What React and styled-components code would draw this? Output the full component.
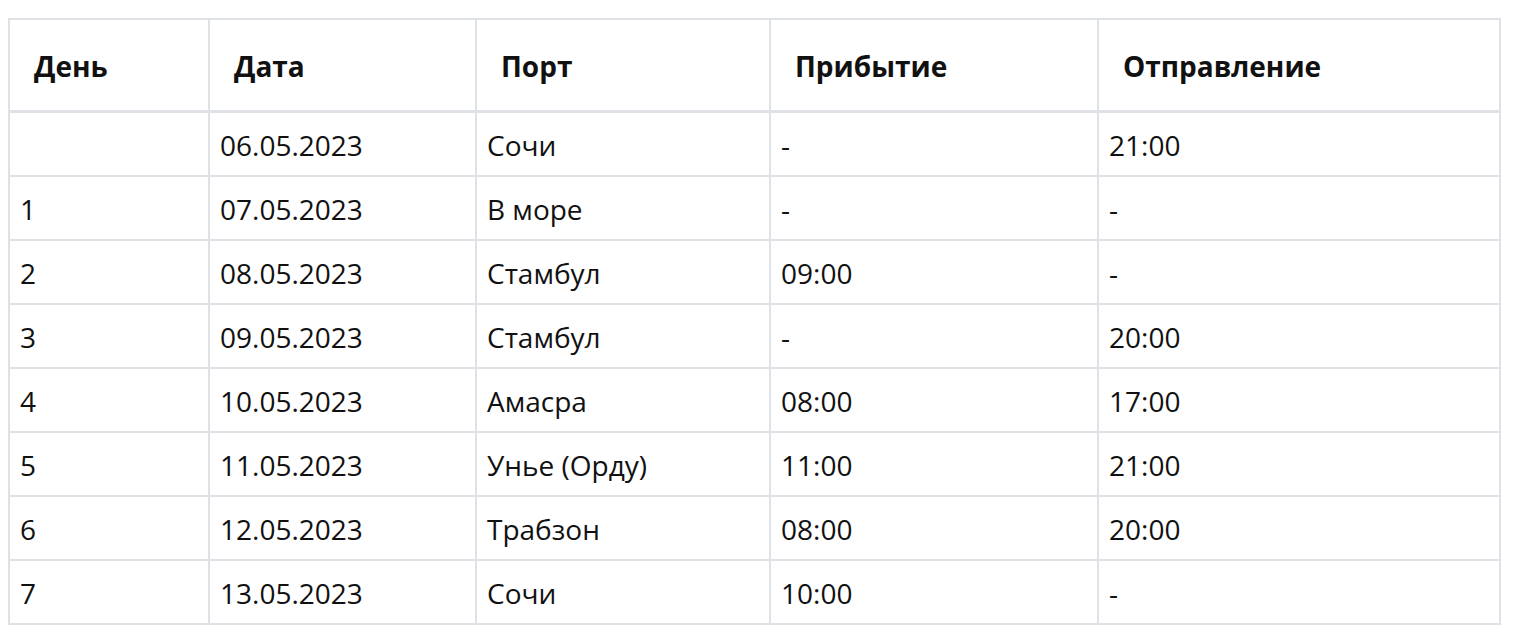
import React from "react";
import styled, { createGlobalStyle } from "styled-components";

const rows = [
  ["", "06.05.2023", "Сочи", "-", "21:00"],
  ["1", "07.05.2023", "В море", "-", "-"],
  ["2", "08.05.2023", "Стамбул", "09:00", "-"],
  ["3", "09.05.2023", "Стамбул", "-", "20:00"],
  ["4", "10.05.2023", "Амасра", "08:00", "17:00"],
  ["5", "11.05.2023", "Унье (Орду)", "11:00", "21:00"],
  ["6", "12.05.2023", "Трабзон", "08:00", "20:00"],
  ["7", "13.05.2023", "Сочи", "10:00", "-"],
];

const widths = [200, 267, 294, 328, 402];

const GlobalStyle = createGlobalStyle`
  body {
    margin: 0;
    background: #fff;
    font-family: "Open Sans", "Noto Sans", sans-serif;
    color: #212529;
  }
`;

const Wrapper = styled.div`
  padding: 18px 16px 0 8px;
`;

const Table = styled.table`
  border-collapse: collapse;
  table-layout: fixed;
  width: 1491px;
  border: 2px solid #dee2e6;
  font-size: 28px;
  line-height: 1.4;
`;

const Th = styled.th`
  text-align: left;
  font-weight: 700;
  height: 86px;
  padding: 4px 24px 0;
  border: 2px solid #dee2e6;
  border-bottom-width: 3px;
  color: #111;
  vertical-align: middle;
`;

const Td = styled.td`
  height: 58px;
  padding: 4px 10px 0;
  border: 2px solid #dee2e6;
  vertical-align: middle;
  color: #111;
`;

const App = () => {
  return (
    <Wrapper>
      <GlobalStyle />
      <Table>
        <colgroup>
          {widths.map((w, i) => (
            <col key={i} style={{ width: w }} />
          ))}
        </colgroup>
        <thead>
          <tr>
            <Th>День</Th>
            <Th>Дата</Th>
            <Th>Порт</Th>
            <Th>Прибытие</Th>
            <Th>Отправление</Th>
          </tr>
        </thead>
        <tbody>
          {rows.map((r, i) => (
            <tr key={i}>
              {r.map((c, j) => (
                <Td key={j}>{c}</Td>
              ))}
            </tr>
          ))}
        </tbody>
      </Table>
    </Wrapper>
  );
};

export default App;
